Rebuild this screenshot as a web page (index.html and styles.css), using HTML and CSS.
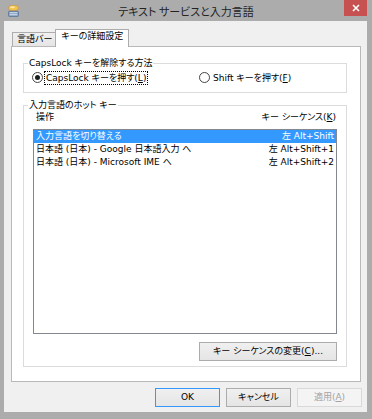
FILE: index.html
```html
<!DOCTYPE html>
<html lang="ja">
<head>
  <meta charset="UTF-8" />
  <title>テキスト サービスと入力言語</title>
  <link rel="stylesheet" href="styles.css">
</head>
<body>
<div class="window">
  <div class="titlebar">
    <div class="title-left">
      <svg class="app-icon" width="11" height="12" viewBox="0 0 11 12">
        <ellipse cx="5.5" cy="3" rx="5" ry="2.7" fill="#f3c24f" stroke="#c9962b" stroke-width="0.6"/>
        <ellipse cx="4.5" cy="2.2" rx="2.5" ry="1" fill="#fbe6a6"/>
        <rect x="0.5" y="6.2" width="10" height="5.3" rx="1" fill="#7390b6" stroke="#4d6a92" stroke-width="0.6"/>
        <rect x="1.5" y="7.3" width="8" height="1" fill="#e3ecf7"/>
        <rect x="1.5" y="9.3" width="8" height="1" fill="#e3ecf7"/>
      </svg>
    </div>
    <div class="title">テキスト サービスと入力言語</div>
    <div class="title-right">
      <div class="close">
        <svg width="8" height="8" viewBox="0 0 8 8">
          <path d="M1 1 L7 7 M7 1 L1 7" stroke="#fff" stroke-width="1.6"/>
        </svg>
      </div>
    </div>
  </div>

  <div class="client">
    <!-- tab strip -->
    <div class="tabs">
      <div class="tab">言語バー</div>
      <div class="tab active">キーの詳細設定</div>
    </div>

    <div class="panel">
      <fieldset class="group">
        <legend>CapsLock キーを解除する方法</legend>
        <div class="radio-row">
          <label class="radio">
            <span class="dot checked"></span>
            <span class="radio-text focus">CapsLock キーを押す(<u>L</u>)</span>
          </label>
          <label class="radio">
            <span class="dot"></span>
            <span class="radio-text">Shift キーを押す(<u>F</u>)</span>
          </label>
        </div>
      </fieldset>

      <fieldset class="group hotkeys">
        <legend>入力言語のホット キー</legend>
        <div class="list-head">
          <span>操作</span>
          <span>キー シーケンス(<u>K</u>)</span>
        </div>
        <div class="listbox">
          <div class="item selected"><span>入力言語を切り替える</span><span>左 Alt+Shift</span></div>
          <div class="item"><span>日本語 (日本) - Google 日本語入力 へ</span><span>左 Alt+Shift+1</span></div>
          <div class="item"><span>日本語 (日本) - Microsoft IME へ</span><span>左 Alt+Shift+2</span></div>
        </div>
        <div class="change-row">
          <button class="btn change">キー シーケンスの変更(<u>C</u>)...</button>
        </div>
      </fieldset>
    </div>

    <div class="buttons">
      <button class="btn default">OK</button>
      <button class="btn">キャンセル</button>
      <button class="btn" disabled>適用(<u>A</u>)</button>
    </div>
  </div>
</div>
</body>
</html>
```

FILE: styles.css
```css
body {
  margin: 0;
  font-family: "DejaVu Sans", "Noto Sans CJK JP", sans-serif;
  font-size: 9px;
  font-feature-settings: "palt";
  color: #000;
  background: #acacac;
  overflow: hidden;
}

.window {
  width: 372px;
  height: 419px;
}

/* title bar */
.titlebar {
  display: grid;
  grid-template-columns: 1fr auto 1fr;
  height: 21px;
}

.app-icon {
  display: block;
  margin: 5px 0 0 8px;
}

.title {
  font-family: "Noto Sans CJK JP", sans-serif;
  font-size: 11px;
  line-height: 21px;
  color: #222;
  padding-top: 1px;
}

.title-right {
  display: flex;
  justify-content: flex-end;
  padding-right: 5px;
}

.close {
  width: 23px;
  height: 16px;
  background: #c75050;
  display: flex;
  align-items: center;
  justify-content: center;
}

.close svg {
  display: block;
}

/* client area */
.client {
  margin-left: 4px;
  width: 363px;
  height: 391px;
  box-sizing: border-box;
  padding: 8px 5px 5px 7px;
  background: #f0f0f0;
  display: flex;
  flex-direction: column;
}

.tabs {
  display: flex;
  align-items: flex-end;
  height: 17px;
  margin-left: 1px;
}

.tab {
  height: 14px;
  box-sizing: border-box;
  border: 1px solid #acacac;
  border-bottom: none;
  border-right: none;
  background: linear-gradient(#f0f0f0, #e5e5e5);
  padding: 0 3px 0 4px;
  line-height: 12px;
  white-space: nowrap;
}

.tab.active {
  height: 18px;
  margin-bottom: -1px;
  border-right: 1px solid #acacac;
  background: #fff;
  padding: 0 5px;
  line-height: 13px;
  position: relative;
  z-index: 1;
}

.panel {
  height: 336px;
  box-sizing: border-box;
  margin-right: 1px;
  border: 1px solid #b9b9b9;
  background: #fff;
  padding: 10px 13px 14px 11px;
}

/* group boxes */
.group {
  margin: 0;
  padding: 0;
  border: 1px solid #dcdcdc;
  min-width: 0;
}

.group legend {
  margin-left: 4px;
  padding: 0 1px;
  line-height: 12px;
  height: 12px;
}

.hotkeys {
  margin-top: 6px;
}

.radio-row {
  display: grid;
  grid-template-columns: 167px auto;
  padding: 1px 0 7px 8px;
}

.radio {
  display: flex;
  align-items: center;
  height: 15px;
}

.dot {
  width: 9px;
  height: 9px;
  border: 1px solid #444;
  border-radius: 50%;
  background: #fff;
  display: flex;
  align-items: center;
  justify-content: center;
  margin-right: 1px;
}

.dot.checked::after {
  content: "";
  width: 5px;
  height: 5px;
  border-radius: 50%;
  background: #1c1c1c;
}

.radio-text {
  border: 1px dotted transparent;
  padding: 0 1px;
  line-height: 12px;
}

.radio-text.focus {
  border-color: #000;
}

/* hot key list */
.list-head {
  display: flex;
  justify-content: space-between;
  margin: 0 9px;
  padding: 0 1px 0 3px;
  line-height: 12px;
}

.listbox {
  height: 205px;
  box-sizing: border-box;
  margin: 6px 9px 0;
  border: 1px solid #828790;
  background: #fff;
}

.item {
  display: flex;
  justify-content: space-between;
  height: 13px;
  line-height: 13px;
  padding: 0 2px;
  white-space: nowrap;
}

.item.selected {
  background: #3399ff;
  color: #fff;
}

.change-row {
  display: flex;
  justify-content: flex-end;
  margin: 8px 9px 5px;
}

/* buttons */
.btn {
  height: 19px;
  width: 65px;
  box-sizing: border-box;
  padding: 0;
  border: 1px solid #acacac;
  background: linear-gradient(#f0f0f0, #e5e5e5);
  font: inherit;
  font-feature-settings: "palt";
  color: #000;
  line-height: 15px;
}

.btn.change {
  width: 138px;
}

.btn.default {
  border-color: #3399ff;
}

.btn:disabled {
  border-color: #d9d9d9;
  background: #f4f4f4;
  color: #a3a3a3;
}

.buttons {
  display: flex;
  justify-content: flex-end;
  gap: 6px;
  margin-top: 6px;
}
```
